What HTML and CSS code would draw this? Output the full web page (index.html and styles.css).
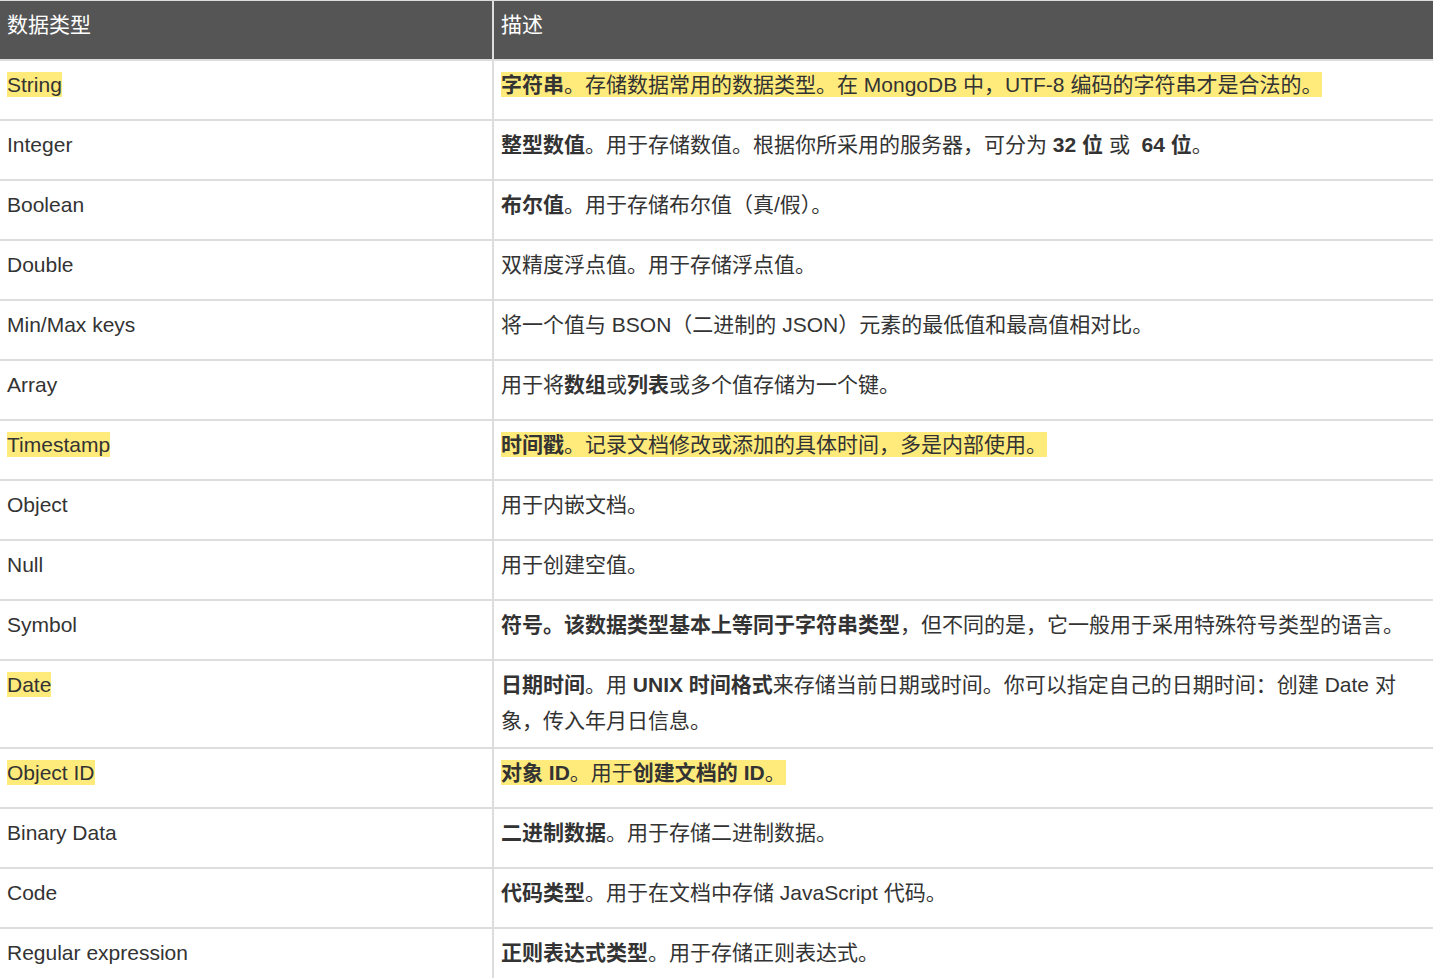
FILE: index.html
```html
<!DOCTYPE html>
<html lang="zh-CN">
<head>
<meta charset="utf-8">
<title>MongoDB 数据类型</title>
<link rel="stylesheet" href="styles.css">
</head>
<body>
<table class="types">
  <colgroup><col class="c1"><col class="c2"></colgroup>
  <thead>
    <tr><th>数据类型</th><th>描述</th></tr>
  </thead>
  <tbody>
    <tr><td><mark>String</mark></td><td><mark><b>字符串</b>。存储数据常用的数据类型。在 MongoDB 中，UTF-8 编码的字符串才是合法的。</mark></td></tr>
    <tr><td>Integer</td><td><b>整型数值</b>。用于存储数值。根据你所采用的服务器，可分为 <b>32 位</b> 或&nbsp; <b>64 位</b>。</td></tr>
    <tr><td>Boolean</td><td><b>布尔值</b>。用于存储布尔值（真/假）。</td></tr>
    <tr><td>Double</td><td>双精度浮点值。用于存储浮点值。</td></tr>
    <tr><td>Min/Max keys</td><td>将一个值与 BSON（二进制的 JSON）元素的最低值和最高值相对比。</td></tr>
    <tr><td>Array</td><td>用于将<b>数组</b>或<b>列表</b>或多个值存储为一个键。</td></tr>
    <tr><td><mark>Timestamp</mark></td><td><mark><b>时间戳</b>。记录文档修改或添加的具体时间，多是内部使用。</mark></td></tr>
    <tr><td>Object</td><td>用于内嵌文档。</td></tr>
    <tr><td>Null</td><td>用于创建空值。</td></tr>
    <tr><td>Symbol</td><td><b>符号。该数据类型基本上等同于字符串类型</b>，但不同的是，它一般用于采用特殊符号类型的语言。</td></tr>
    <tr><td><mark>Date</mark></td><td><b>日期时间</b>。用 <b>UNIX 时间格式</b>来存储当前日期或时间。你可以指定自己的日期时间：创建 Date 对象，传入年月日信息。</td></tr>
    <tr><td><mark>Object ID</mark></td><td><mark><b>对象 ID</b>。用于<b>创建文档的 ID</b>。</mark></td></tr>
    <tr><td>Binary Data</td><td><b>二进制数据</b>。用于存储二进制数据。</td></tr>
    <tr><td>Code</td><td><b>代码类型</b>。用于在文档中存储 JavaScript 代码。</td></tr>
    <tr><td>Regular expression</td><td><b>正则表达式类型</b>。用于存储正则表达式。</td></tr>
  </tbody>
</table>
</body>
</html>
```

FILE: styles.css
```css
html, body {
  margin: 0;
  padding: 0;
  background: #fff;
}

body {
  font-family: "Liberation Sans", Arial, "Noto Sans CJK SC", sans-serif;
  font-size: 21px;
  color: #333;
}

.types {
  width: 100%;
  table-layout: fixed;
  border-collapse: separate;
  border-spacing: 0;
  border-top: 1px solid #ddd;
}

.types .c1 {
  width: 494px;
}

.types th,
.types td {
  box-sizing: border-box;
  text-align: left;
  vertical-align: top;
  line-height: 36px;
  padding: 6px 20px 8px 7px;
  border-bottom: 2px solid #ddd;
  height: 60px;
}

.types th:first-child,
.types td:first-child {
  border-right: 2px solid #ddd;
}

.types th {
  background: #555;
  color: #fff;
  font-weight: normal;
  height: 60px;
}

.types b {
  font-weight: bold;
}

.types mark {
  background: #ffeb7c;
  color: #333;
  padding: 1px 0;
}
```
